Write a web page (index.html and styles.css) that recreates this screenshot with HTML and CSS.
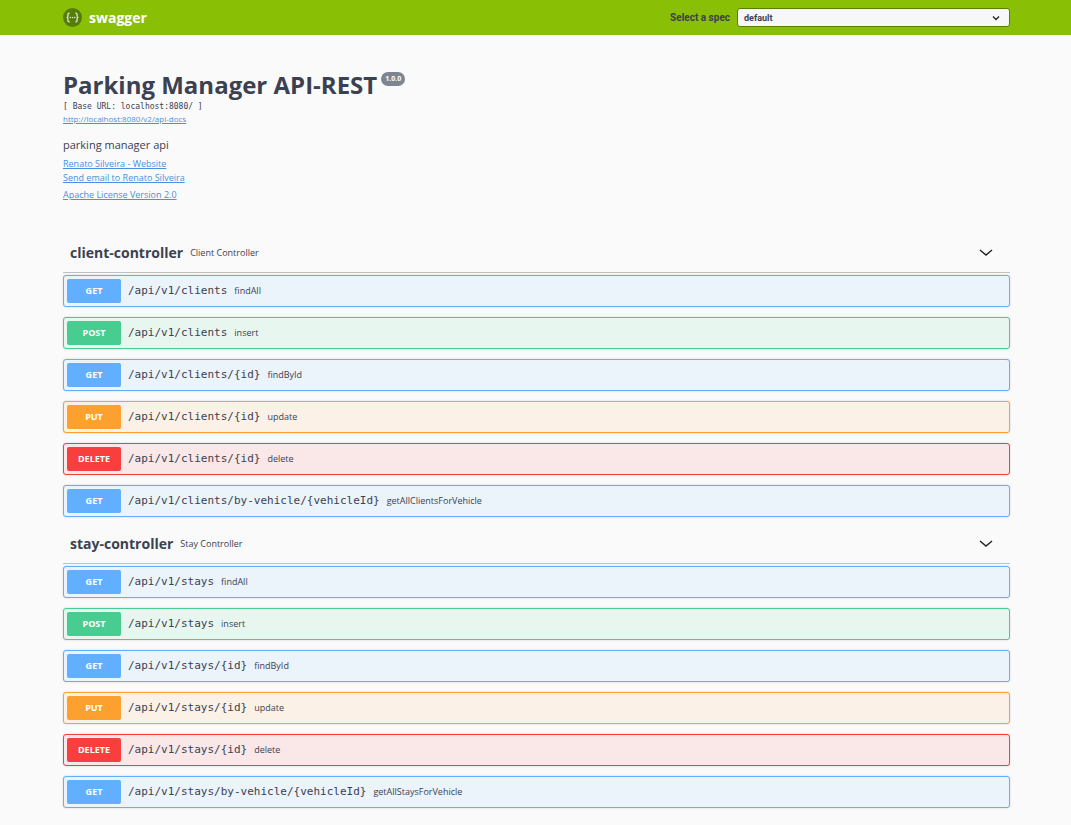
FILE: index.html
```html
<!DOCTYPE html>
<html lang="en">
<head>
<meta charset="utf-8">
<meta name="viewport" content="width=device-width, initial-scale=1">
<title>Swagger UI</title>
<link rel="stylesheet" href="styles.css">
</head>
<body>
<header class="topbar">
  <div class="wrapper topbar-inner">
    <a class="brand" href="#">
      <svg class="logo" viewBox="0 0 40 40" aria-hidden="true">
        <circle cx="20" cy="20" r="20" fill="#557d08"/>
        <g fill="none" stroke="#e4efcf" stroke-width="2.6">
          <path d="M14 11h-1c-2 0-2.600 1-2.600 2.800v3c0 2-.8 3.200-2.800 3.200 2 0 2.800 1.200 2.800 3.200v3c0 1.800.6 2.800 2.600 2.800h1"/>
          <path d="M26 11h1c2 0 2.600 1 2.600 2.800v3c0 2 .8 3.200 2.800 3.200-2 0-2.800 1.200-2.800 3.200v3c0 1.800-.6 2.800-2.600 2.800h-1"/>
        </g>
        <g fill="#e4efcf"><circle cx="15.300" cy="20" r="1.600"/><circle cx="20" cy="20" r="1.600"/><circle cx="24.700" cy="20" r="1.600"/></g>
      </svg>
      <span>swagger</span>
    </a>
    <label class="spec-label" for="spec">Select a spec</label>
    <div class="select-box">
      <select id="spec" class="spec-select"><option>default</option></select>
      <svg class="select-arrow" viewBox="0 0 10 10" aria-hidden="true"><path d="M2 3.500l3 3 3-3" fill="none" stroke="#222" stroke-width="1.300"/></svg>
    </div>
  </div>
</header>
<main class="wrapper">
  <section class="info">
    <div class="title-row"><h1 class="title">Parking Manager API-REST</h1><span class="version">1.0.0</span></div>
    <div class="base-url">[ Base URL: localhost:8080/ ]</div>
    <a class="docs-link" href="#">http://localhost:8080/v2/api-docs</a>
    <p class="description">parking manager api</p>
    <a class="link" href="#">Renato Silveira - Website</a>
    <a class="link" href="#">Send email to Renato Silveira</a>
    <a class="link license" href="#">Apache License Version 2.0</a>
  </section>

  <section class="tag">
    <div class="tag-head">
      <h2 class="tag-name">client-controller</h2><span class="tag-text">Client Controller</span>
      <button class="toggle" aria-label="Collapse client-controller"><svg class="chevron" viewBox="0 0 14 14"><path d="M1 4l6 5 6-5"/></svg></button>
    </div>
    <div class="ops">
      <div class="op get"><button class="method">GET</button><span class="path">/api/v1/clients</span><span class="summary">findAll</span></div>
      <div class="op post"><button class="method">POST</button><span class="path">/api/v1/clients</span><span class="summary">insert</span></div>
      <div class="op get"><button class="method">GET</button><span class="path">/api/v1/clients/{id}</span><span class="summary">findById</span></div>
      <div class="op put"><button class="method">PUT</button><span class="path">/api/v1/clients/{id}</span><span class="summary">update</span></div>
      <div class="op delete"><button class="method">DELETE</button><span class="path">/api/v1/clients/{id}</span><span class="summary">delete</span></div>
      <div class="op get"><button class="method">GET</button><span class="path">/api/v1/clients/by-vehicle/{vehicleId}</span><span class="summary">getAllClientsForVehicle</span></div>
    </div>
  </section>

  <section class="tag">
    <div class="tag-head">
      <h2 class="tag-name">stay-controller</h2><span class="tag-text">Stay Controller</span>
      <button class="toggle" aria-label="Collapse stay-controller"><svg class="chevron" viewBox="0 0 14 14"><path d="M1 4l6 5 6-5"/></svg></button>
    </div>
    <div class="ops">
      <div class="op get"><button class="method">GET</button><span class="path">/api/v1/stays</span><span class="summary">findAll</span></div>
      <div class="op post"><button class="method">POST</button><span class="path">/api/v1/stays</span><span class="summary">insert</span></div>
      <div class="op get"><button class="method">GET</button><span class="path">/api/v1/stays/{id}</span><span class="summary">findById</span></div>
      <div class="op put"><button class="method">PUT</button><span class="path">/api/v1/stays/{id}</span><span class="summary">update</span></div>
      <div class="op delete"><button class="method">DELETE</button><span class="path">/api/v1/stays/{id}</span><span class="summary">delete</span></div>
      <div class="op get"><button class="method">GET</button><span class="path">/api/v1/stays/by-vehicle/{vehicleId}</span><span class="summary">getAllStaysForVehicle</span></div>
    </div>
  </section>
</main>
</body>
</html>
```
FILE: styles.css
```css
* { box-sizing: border-box; }
body { margin: 0; background: #fafafa; color: #3b4151; font-family: "Open Sans", "Noto Sans", sans-serif; }
button { border: 0; padding: 0; font: inherit; cursor: pointer; }
h1, h2, p { margin: 0; }
.wrapper { max-width: 973px; margin: 0 auto; padding: 0 12px 0 14px; }

.topbar { background: #89bf04; }
.topbar-inner { display: flex; align-items: center; padding-top: 8px; padding-bottom: 8px; }
.brand { display: flex; align-items: center; flex: 1; gap: 7px; color: #fff; font-size: 14px; line-height: 19px; font-weight: 700; text-decoration: none; }
.logo { width: 19px; height: 19px; }
.spec-label { margin-right: 7px; font: 700 10px/16px Roboto, sans-serif; }
.select-box { position: relative; width: 273px; }
.spec-select { display: block; width: 100%; height: 19px; padding: 0 6px; appearance: none; border: 1px solid #547f00; border-radius: 3px; background: #f7f7f7; color: #3b4151; font: 700 9px Roboto, sans-serif; }
.select-arrow { position: absolute; right: 9px; top: 5px; width: 10px; height: 10px; pointer-events: none; }

.info { display: flex; flex-direction: column; align-items: flex-start; padding: 33px 0; }
.title-row { display: flex; align-items: flex-start; gap: 4px; }
.title { font-size: 24px; line-height: 33px; font-weight: 700; }
.version { margin-top: 4px; padding: 0 4px; border-radius: 7px; background: #7d8492; color: #fff; font-size: 7px; line-height: 14px; font-weight: 700; }
.base-url { font: 8px/11px "DejaVu Sans Mono", monospace; }
.docs-link { color: #4990e2; font-size: 8px; line-height: 14px; }
.description { margin: 11px 0 4px; font-size: 11px; line-height: 16px; }
.link { color: #4990e2; font-size: 9px; line-height: 14px; }
.license { margin-top: 3px; }

.tag-head { display: flex; align-items: center; height: 38px; padding: 0 17px 2px 7px; border-bottom: 1px solid #bdc0c5; }
.tag-name { font-size: 14px; line-height: 20px; font-weight: 700; }
.tag-text { flex: 1; padding-left: 7px; font-size: 9px; line-height: 14px; }
.toggle { display: flex; background: none; }
.chevron { width: 14px; height: 14px; fill: none; stroke: #222; stroke-width: 1.400; }
.ops { display: grid; gap: 10px; padding: 2px 0 9px; }
.op { display: flex; align-items: center; padding: 3px; border: 1px solid; border-radius: 3px; box-shadow: 0 0 2px rgba(0, 0, 0, .19); }
.method { width: 54px; border-radius: 2px; color: #fff; font-size: 9px; line-height: 24px; font-weight: 700; }
.path { padding: 0 7px; font: 11px/16px "DejaVu Sans Mono", monospace; }
.summary { font-size: 9px; line-height: 14px; }
.get { border-color: #61affe; background: #ebf3fb; }
.get .method { background: #61affe; }
.post { border-color: #49cc90; background: #e8f6f0; }
.post .method { background: #49cc90; }
.put { border-color: #fca130; background: #fbf1e6; }
.put .method { background: #fca130; }
.delete { border-color: #f93e3e; background: #fae7e7; }
.delete .method { background: #f93e3e; }
```
